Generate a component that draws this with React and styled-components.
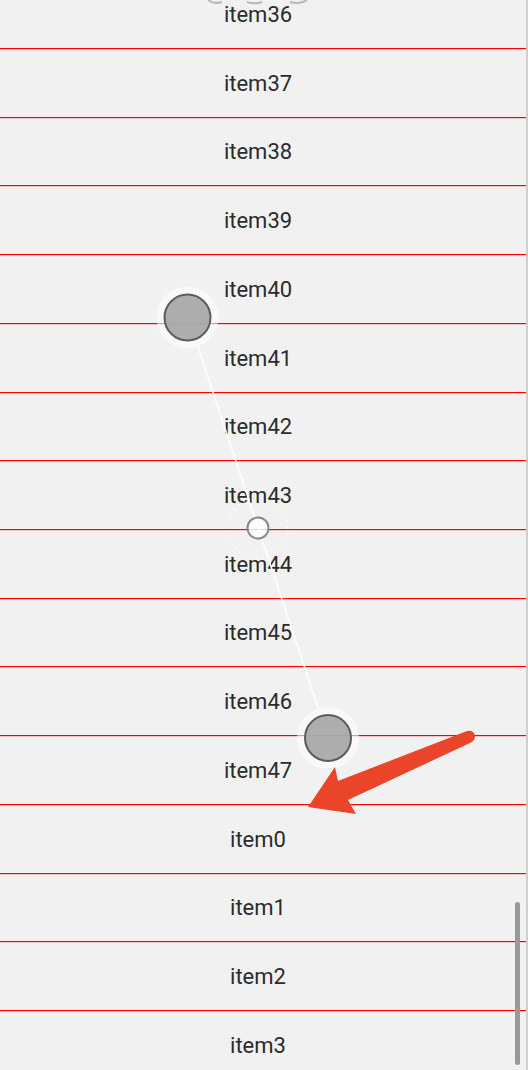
import styled, { createGlobalStyle } from "styled-components";

const GlobalStyle = createGlobalStyle`
  html, body {
    margin: 0;
    padding: 0;
    background: #f1f1f1;
  }
`;

const ROW_PITCH = 68.714;
const FIRST_LINE = 48;

const Screen = styled.div`
  position: relative;
  width: 528px;
  height: 1070px;
  overflow: hidden;
  background: #f1f1f1;
  font-family: Roboto, "Noto Sans", sans-serif;
`;
const List = styled.div`
  display: flex;
  flex-direction: column;
  width: 526px;
  margin-top: -20px;
  border-right: 2px solid #cfcfcf;
`;
const Row = styled.div`
  box-sizing: border-box;
  height: ${p => p.$h}px;
  flex: none;
  display: flex;
  align-items: center;
  justify-content: center;
  padding-right: 10px;
  border-bottom: 1px solid #ff0000;
  box-shadow: 0 1px 0 rgba(255, 0, 0, 0.18);
  font-size: 22px;
  color: #2b2b2b;
`;
const ScrollThumb = styled.div`
  position: absolute;
  left: 515px;
  top: 902px;
  width: 5px;
  height: 163px;
  border-radius: 3px;
  background: #999999;
`;
const Overlay = styled.svg`
  position: absolute;
  left: 0;
  top: 0;
  pointer-events: none;
`;

const labels = [
  ...Array.from({ length: 12 }, (_, i) => "item" + (36 + i)),
  ...Array.from({ length: 4 }, (_, i) => "item" + i),
];

// keep every separator on a whole pixel
const lineAt = k => Math.round(FIRST_LINE + k * ROW_PITCH);
const rows = labels.map((label, i) => ({
  label,
  h: i === 0 ? FIRST_LINE + 1 + 20 : lineAt(i) - lineAt(i - 1),
}));

function TouchPoint({ x, y }) {
  return (
    <g>
      <circle cx={x} cy={y} r="31" fill="#ffffff" opacity="0.55" />
      <circle cx={x} cy={y} r="23" fill="#a4a4a4" fillOpacity="0.9" stroke="#5c5c5c" strokeWidth="2" />
    </g>
  );
}

function Gesture() {
  return (
    <Overlay width="528" height="1070" viewBox="0 0 528 1070">
      <path d="M208 0 A12 8 0 0 0 222 2" fill="none" stroke="#b8b8b8" strokeWidth="2" />
      <path d="M247 2 A14 8 0 0 0 262 2" fill="none" stroke="#b8b8b8" strokeWidth="2" />
      <path d="M290 2 A14 8 0 0 0 307 0" fill="none" stroke="#b8b8b8" strokeWidth="2" />
      <line x1="197.8" y1="346.4" x2="318.2" y2="708.6" stroke="#ffffff" strokeWidth="1.5" />
      <circle cx="258" cy="528" r="30" fill="none" stroke="#ffffff" strokeWidth="2" strokeDasharray="1 5" />
      <circle cx="258" cy="528" r="10.5" fill="#ffffff" fillOpacity="0.8" stroke="#8a8a8a" strokeWidth="2" />
      <TouchPoint x={187.5} y={317.5} />
      <TouchPoint x={328} y={738} />
      <path
        d="M467 731 Q474 730 475 736 Q475 741 470 743 L348 800 L356 814 L308 807 L335 767 L338 781 Z"
        fill="#ea4429"
      />
    </Overlay>
  );
}

export default function App() {
  return (
    <Screen>
      <GlobalStyle />
      <List>
        {rows.map(r => (
          <Row key={r.label} $h={r.h}>
            {r.label}
          </Row>
        ))}
      </List>
      <ScrollThumb />
      <Gesture />
    </Screen>
  );
}
